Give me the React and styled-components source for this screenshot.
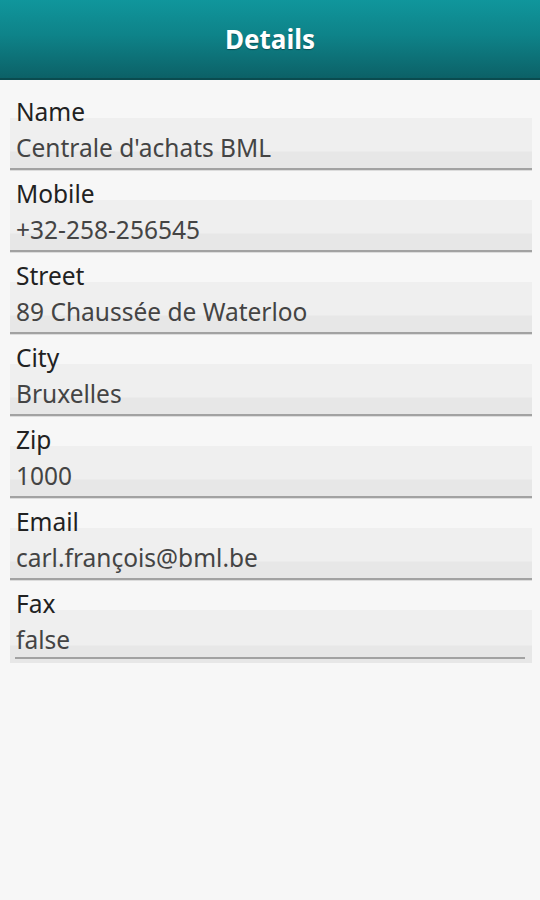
import React from 'react';
import styled, { createGlobalStyle } from 'styled-components';

const GlobalStyle = createGlobalStyle`
  body {
    margin: 0;
    background-color: #f7f7f7;
    font-family: 'Noto Sans', 'Open Sans', sans-serif;
  }
`;

const Page = styled.div`
  min-height: 900px;
  background-color: #f7f7f7;
`;

const Header = styled.header`
  height: 78px;
  display: flex;
  align-items: center;
  justify-content: center;
  background: linear-gradient(to bottom, #10969c 0%, #0e8389 45%, #0c6167 100%);
  border-bottom: 2px solid #0a4b4f;
`;

const Title = styled.h1`
  margin: 0;
  font-size: 26px;
  font-weight: 700;
  color: #ffffff;
  text-shadow: 0 1px 1px rgba(0, 0, 0, 0.35);
`;

const List = styled.div`
  padding: 8px 8px 0 10px;
  display: flex;
  flex-direction: column;
`;

const Field = styled.div`
  display: flex;
  flex-direction: column;
`;

const Label = styled.div`
  position: relative;
  z-index: 1;
  padding: 14px 0 0 6px;
  height: 16px;
  font-size: 24.5px;
  line-height: 19px;
  color: #222222;
`;

const ValueBox = styled.div`
  height: ${(p) => (p.$inset ? '53px' : '50px')};
  padding-left: 6px;
  position: relative;
  background: linear-gradient(to bottom, #efefef 0%, #efefef 66%, #e7e7e7 68%, #e7e7e7 100%);
  border-bottom: ${(p) => (p.$inset ? 'none' : '2px solid #a2a2a2')};
  box-shadow: ${(p) => (p.$inset ? 'none' : '0 1px 0 #dcdcdc')};
`;

const Value = styled.div`
  padding-top: 14px;
  height: 32px;
  font-size: 24.5px;
  line-height: 32px;
  color: #444444;
  white-space: nowrap;
`;

const InsetLine = styled.div`
  position: absolute;
  left: 5px;
  right: 7px;
  top: 47px;
  height: 2px;
  background-color: #a2a2a2;
`;

const fields = [
  { label: 'Name', value: "Centrale d'achats BML" },
  { label: 'Mobile', value: '+32-258-256545' },
  { label: 'Street', value: '89 Chaussée de Waterloo' },
  { label: 'City', value: 'Bruxelles' },
  { label: 'Zip', value: '1000' },
  { label: 'Email', value: 'carl.françois@bml.be' },
  { label: 'Fax', value: 'false', inset: true },
];

const App = () => {
  return (
    <Page>
      <GlobalStyle />
      <Header>
        <Title>Details</Title>
      </Header>
      <List>
        {fields.map((f) => (
          <Field key={f.label}>
            <Label>{f.label}</Label>
            <ValueBox $inset={f.inset}>
              <Value>{f.value}</Value>
              {f.inset && <InsetLine />}
            </ValueBox>
          </Field>
        ))}
      </List>
    </Page>
  );
};

export default App;
